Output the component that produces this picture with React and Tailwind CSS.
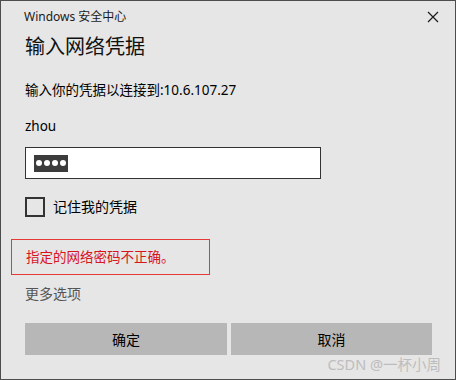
const font = { fontFamily: '"Noto Sans", "Noto Sans CJK SC", sans-serif' };

export default function App() {
  return (
    <div
      className="relative w-[456px] h-[380px] border border-[#4d4d4d] bg-[#e6e6e6] text-black"
      style={font}
    >
      {/* title bar */}
      <div className="relative mt-[9px] h-[14px] pl-[23px] text-[12px] leading-[14px] text-[#1a1a1a]">
        Windows 安全中心
        <button className="absolute right-[16px] top-[1px] w-[12px] h-[12px] text-[#1a1a1a]">
          <svg viewBox="0 0 12 12" className="w-[12px] h-[12px]" fill="none" stroke="currentColor" strokeWidth="1.2">
            <path d="M1 1L11 11M11 1L1 11" />
          </svg>
        </button>
      </div>

      <div className="mt-[9px] pl-[24px] text-[20px] leading-[28px] text-[#111]">输入网络凭据</div>

      <div className="mt-[19px] pl-[24px] text-[13.5px] leading-[20px]">输入你的凭据以连接到:10.6.107.27</div>

      <div className="mt-[16px] pl-[24px] text-[13.5px] leading-[20px]">zhou</div>

      <div className="mt-[11px] ml-[24px] w-[296px] h-[32px] bg-white border border-[#333] flex items-center pl-[8px]">
        <div className="h-[17px] w-[34px] bg-[#3c3c3c] flex items-center justify-center gap-[2px]">
          <span className="w-[6px] h-[6px] rounded-full bg-white" />
          <span className="w-[6px] h-[6px] rounded-full bg-white" />
          <span className="w-[6px] h-[6px] rounded-full bg-white" />
          <span className="w-[6px] h-[6px] rounded-full bg-white" />
        </div>
      </div>

      <label className="mt-[18px] ml-[24px] flex items-center gap-[8px] h-[20px]">
        <span className="w-[20px] h-[20px] border-2 border-[#333] bg-transparent" />
        <span className="text-[14px] leading-[20px]">记住我的凭据</span>
      </label>

      <div className="mt-[22px] ml-[10px] w-[199px] h-[36px] border border-[#e53935] flex items-center pl-[14px] text-[13.5px] text-[#d8141c]">
        指定的网络密码不正确。
      </div>

      <div className="mt-[9px] pl-[24px] text-[14px] leading-[20px] text-[#555]">更多选项</div>

      <div className="mt-[19px] ml-[24px] flex gap-[4px]">
        <button className="w-[202px] h-[32px] bg-[#b7b7b7] text-[14px]">确定</button>
        <button className="w-[201px] h-[32px] bg-[#b7b7b7] text-[14px]">取消</button>
      </div>

      <div className="absolute right-[14px] bottom-[6px] text-[14.5px] leading-[18px] text-[#bdbdbd]">
        CSDN @一杯小周
      </div>
    </div>
  );
}
